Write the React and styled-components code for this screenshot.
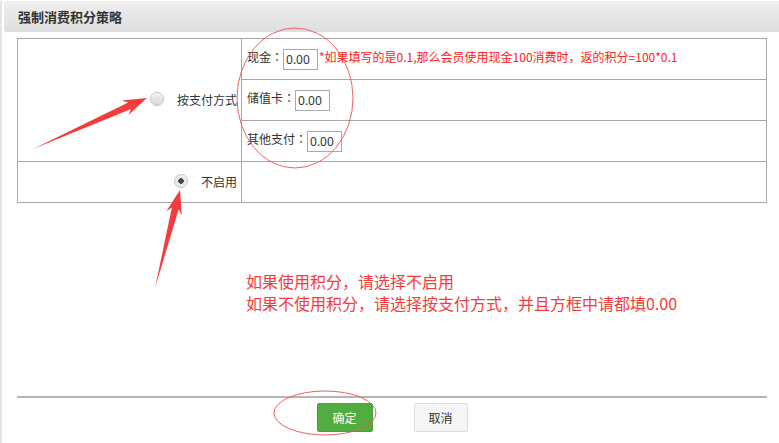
import styled, { createGlobalStyle } from 'styled-components';

const GlobalStyle = createGlobalStyle`
    html, body {
        margin: 0;
        padding: 0;
        background: #fff;
    }
    body {
        font-family: "Noto Sans CJK SC", "Noto Sans", sans-serif;
        color: #333;
    }
`;

// tapered red arrow, from tail (x1,y1) to tip (x2,y2)
const arrowPoints = (x1, y1, x2, y2, headLen, headW, shaftW) => {
    const dx = x2 - x1;
    const dy = y2 - y1;
    const len = Math.hypot(dx, dy);
    const ux = dx / len;
    const uy = dy / len;
    const nx = -uy;
    const ny = ux;
    const bx = x2 - ux * headLen;
    const by = y2 - uy * headLen;
    const nbx = x2 - ux * (headLen - 5);
    const nby = y2 - uy * (headLen - 5);
    const pts = [
        [x1, y1],
        [nbx + nx * shaftW, nby + ny * shaftW],
        [bx + nx * headW, by + ny * headW],
        [x2, y2],
        [bx - nx * headW, by - ny * headW],
        [nbx - nx * shaftW, nby - ny * shaftW],
    ];
    return pts.map((p) => p.map((v) => v.toFixed(1)).join(',')).join(' ');
};

const App = () => {
    return (
        <Page>
            <GlobalStyle />
            <Header>强制消费积分策略</Header>
            <Content>
                <Table>
                    <tbody>
                        <tr>
                            <LabelCell rowSpan={3}>
                                <Option>
                                    <Radio />
                                    按支付方式
                                </Option>
                            </LabelCell>
                            <FieldCell>
                                现金<Colon>：</Colon><Input defaultValue="0.00" />
                                <Hint>*如果填写的是0.1,那么会员使用现金100消费时，返的积分=100*0.1</Hint>
                            </FieldCell>
                        </tr>
                        <tr>
                            <FieldCell>
                                储值卡<Colon>：</Colon><Input defaultValue="0.00" />
                            </FieldCell>
                        </tr>
                        <tr>
                            <FieldCell>
                                其他支付<Colon>：</Colon><Input defaultValue="0.00" />
                            </FieldCell>
                        </tr>
                        <tr>
                            <LabelCell>
                                <Option>
                                    <Radio checked />
                                    不启用
                                </Option>
                            </LabelCell>
                            <FieldCell />
                        </tr>
                    </tbody>
                </Table>
                <Notes>
                    <p>如果使用积分，请选择不启用</p>
                    <p>如果不使用积分，请选择按支付方式，并且方框中请都填0.00</p>
                </Notes>
                <Footer>
                    <Button primary>确定</Button>
                    <Button>取消</Button>
                </Footer>
            </Content>
            <Marks width="779" height="443" viewBox="0 0 779 443">
                <ellipse cx="295" cy="97" rx="58" ry="70" fill="none" stroke="#f06060" strokeWidth="1" />
                <ellipse cx="325" cy="412" rx="51" ry="22" fill="none" stroke="#f06060" strokeWidth="1" />
                <polygon points={arrowPoints(33, 148, 147, 97, 24, 8, 3.5)} fill="#f43c3c" />
                <polygon points={arrowPoints(155, 287, 180, 189, 24, 8, 3.5)} fill="#f43c3c" />
            </Marks>
        </Page>
    );
};

export default App;

const Page = styled.div`
    position: relative;
    min-height: 443px;
    border-left: 2px solid #e4e4e4;
    box-sizing: border-box;
`;

const Header = styled.div`
    margin: 1px 0 0 2px;
    height: 31px;
    line-height: 31px;
    padding-left: 14px;
    background: linear-gradient(#efefef, #dedede);
    border-radius: 3px 0 0 3px;
    font-size: 13px;
    font-weight: 700;
    color: #333;
`;

const Content = styled.div`
    padding: 6px 10px 0 15px;
`;

const Table = styled.table`
    width: 750px;
    border-collapse: collapse;
    font-size: 12px;
    color: #333;

    td {
        border: 1px solid #aca4a7;
        height: 41px;
        padding: 0;
        box-sizing: border-box;
    }
`;

const LabelCell = styled.td`
    width: 224px;
    text-align: right;
    padding-right: 4px !important;
`;

const Option = styled.span`
    display: inline-flex;
    align-items: center;
    gap: 13px;
`;

const Radio = styled.span`
    display: inline-block;
    width: 12px;
    height: 12px;
    border-radius: 50%;
    border: 1px solid #c2c2c2;
    background: ${(p) => (p.checked
        ? 'radial-gradient(circle, #444 0 2.5px, #e8e8e8 3px)'
        : 'linear-gradient(#f0f0f0, #d8d8d8)')};
    box-shadow: inset 0 1px 1px rgba(255, 255, 255, 0.8);
`;

const FieldCell = styled.td`
    padding-left: 5px !important;
    white-space: nowrap;
`;

const Colon = styled.span`
    display: inline-block;
    width: 12px;
    text-align: center;
    font-family: "Noto Sans CJK TC", "Noto Sans CJK SC", sans-serif;
`;

const Input = styled.input`
    width: 35px;
    height: 21px;
    box-sizing: border-box;
    border: 1px solid #a9a9a9;
    padding: 0 2px;
    font-family: "Noto Sans", sans-serif;
    font-size: 12px;
    color: #333;
    vertical-align: middle;
`;

const Hint = styled.span`
    color: #ff2020;
    margin-left: 1px;
`;

const Notes = styled.div`
    margin: 67px 0 0 229px;
    font-size: 16px;
    line-height: 22px;
    color: #f43c3c;

    p {
        margin: 0;
    }
`;

const Footer = styled.div`
    margin-top: 82px;
    width: 750px;
    border-top: 2px solid #b5b5b5;
    padding-top: 5px;
    display: flex;
    justify-content: center;
    gap: 41px;
`;

const Button = styled.button`
    width: ${(p) => (p.primary ? '56px' : '54px')};
    height: 29px;
    border-radius: 2px;
    border: 1px solid ${(p) => (p.primary ? '#4a9e3c' : '#dcdcdc')};
    background: ${(p) => (p.primary ? '#52ad41' : '#f5f5f5')};
    color: ${(p) => (p.primary ? '#fff' : '#333')};
    font-family: "Noto Sans CJK SC", "Noto Sans", sans-serif;
    font-size: 12px;
    padding: 0;
`;

const Marks = styled.svg`
    position: absolute;
    left: -2px;
    top: 0;
    pointer-events: none;
`;
